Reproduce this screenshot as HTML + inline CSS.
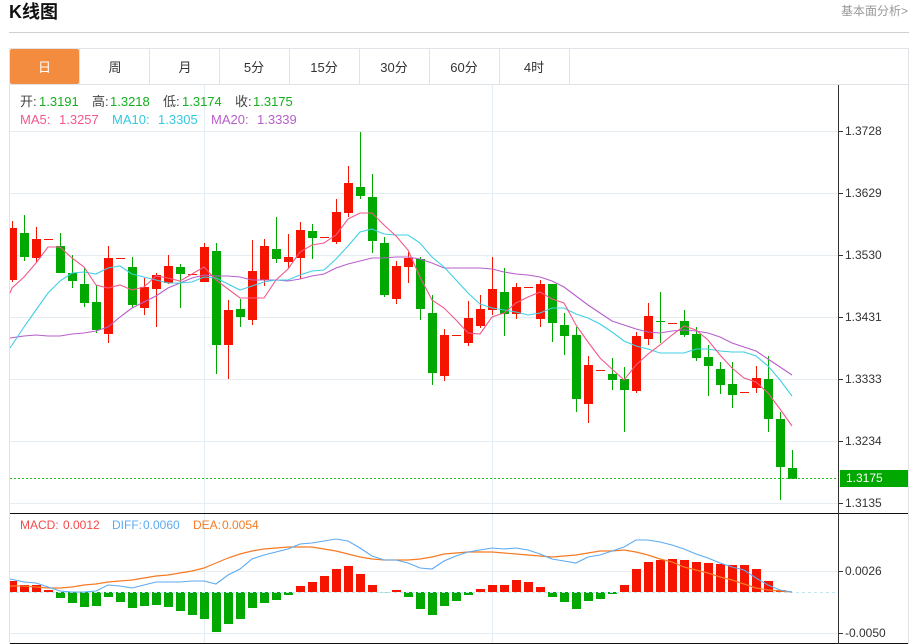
<!DOCTYPE html>
<html lang="zh">
<head>
<meta charset="utf-8">
<title>K线图</title>
<style>
html,body{margin:0;padding:0;background:#fff;}
body{width:914px;height:644px;overflow:hidden;position:relative;font-family:"Liberation Sans","Noto Sans CJK SC",sans-serif;}
.a{position:absolute;white-space:nowrap;}
.tab{position:absolute;top:49px;height:34px;line-height:37px;width:70px;text-align:center;font-size:13px;color:#333;}
.t{font-size:13px;line-height:16px;height:16px;}
.m{font-size:12px;line-height:16px;height:16px;}
.y{font-size:12px;line-height:14px;height:14px;left:845px;color:#333;}
.l{color:#444;}
.g{color:#13b01d;}
</style>
</head>
<body>
<div class="a" style="left:9px;top:0;font-size:18px;font-weight:bold;line-height:24px;color:#111;">K线图</div>
<div class="a" style="right:6px;top:3px;font-size:12px;line-height:16px;color:#999;">基本面分析&gt;</div>
<div class="a" style="left:9px;top:32px;width:900px;height:1px;background:#d0d0d0;"></div>

<svg class="a" style="left:0;top:0;" width="914" height="644" viewBox="0 0 914 644" xmlns="http://www.w3.org/2000/svg">
<g shape-rendering="crispEdges">
<rect x="9" y="48" width="900" height="1" fill="#e0e4e8"/>
<rect x="9" y="84" width="900" height="1" fill="#e0e4e8"/>
<rect x="9" y="48" width="1" height="596" fill="#e0e4e8"/>
<rect x="908" y="48" width="1" height="596" fill="#e0e4e8"/>
<path fill="#e0e4e8" d="M79 49h1v35h-1zM149 49h1v35h-1zM219 49h1v35h-1zM289 49h1v35h-1zM359 49h1v35h-1zM429 49h1v35h-1zM499 49h1v35h-1zM569 49h1v35h-1z"/>
<rect x="10" y="49" width="69" height="35" rx="2" fill="#f48c3f"/>
<path fill="#e6edf2" d="M10 131h828v1H10zM10 193h828v1H10zM10 255h828v1H10zM10 317h828v1H10zM10 379h828v1H10zM10 441h828v1H10zM10 503h828v1H10zM10 571h828v1H10zM10 633h828v1H10z"/>
<path fill="#e3edf4" d="M204 85h1v558h-1zM492 85h1v558h-1z"/>

<!-- red candles -->
<path fill="#f41400" d="M12 221h1V282h-1zM10 228h7V280h-7zM36 227h1V263h-1zM32 239h9V258h-9zM44 239h9v1h-9zM108 246h1V343h-1zM104 258h9V334h-9zM116 258h9v1h-9zM144 278h1V315h-1zM140 287h9V308h-9zM156 273h1V327h-1zM152 275h9V289h-9zM168 255h1V284h-1zM164 266h9V283h-9zM188 274h9v1h-9zM204 243h1V282h-1zM200 247h9V282h-9zM228 300h1V379h-1zM224 310h9V345h-9zM252 240h1V325h-1zM248 271h9V320h-9zM264 239h1V286h-1zM260 246h9V280h-9zM288 234h1V268h-1zM284 257h9V262h-9zM300 222h1V279h-1zM296 230h9V258h-9zM320 237h9v1h-9zM336 199h1V244h-1zM332 212h9V242h-9zM348 166h1V217h-1zM344 183h9V213h-9zM396 261h1V304h-1zM392 266h9V299h-9zM408 251h1V283h-1zM404 258h9V267h-9zM444 329h1V381h-1zM440 335h9V376h-9zM452 335h9v1h-9zM468 301h1V346h-1zM464 318h9V343h-9zM480 295h1V328h-1zM476 309h9V326h-9zM492 257h1V315h-1zM488 289h9V310h-9zM516 283h1V319h-1zM512 287h9V314h-9zM524 287h9v1h-9zM540 280h1V327h-1zM536 284h9V319h-9zM588 356h1V423h-1zM584 365h9V404h-9zM596 370h9v1h-9zM636 332h1V393h-1zM632 336h9V391h-9zM648 303h1V345h-1zM644 316h9V339h-9zM668 323h9v1h-9zM740 392h9v1h-9zM756 366h1V393h-1zM752 378h9V388h-9z"/>
<!-- green candles -->
<path fill="#00a800" d="M24 215h1V261h-1zM20 233h9V257h-9zM60 233h1V273h-1zM56 246h9V273h-9zM72 255h1V288h-1zM68 273h9V281h-9zM84 268h1V307h-1zM80 284h9V303h-9zM96 285h1V333h-1zM92 302h9V330h-9zM132 257h1V308h-1zM128 267h9V305h-9zM180 264h1V308h-1zM176 267h9V274h-9zM216 243h1V374h-1zM212 251h9V345h-9zM240 299h1V327h-1zM236 309h9V317h-9zM276 217h1V263h-1zM272 249h9V259h-9zM312 224h1V259h-1zM308 231h9V238h-9zM360 132h1V199h-1zM356 187h9V196h-9zM372 174h1V253h-1zM368 197h9V241h-9zM384 237h1V297h-1zM380 243h9V295h-9zM420 257h1V320h-1zM416 259h9V309h-9zM432 295h1V385h-1zM428 313h9V373h-9zM504 268h1V336h-1zM500 292h9V314h-9zM552 284h1V342h-1zM548 284h9V323h-9zM564 313h1V355h-1zM560 325h9V336h-9zM576 327h1V412h-1zM572 335h9V399h-9zM612 358h1V390h-1zM608 374h9V380h-9zM624 367h1V432h-1zM620 379h9V390h-9zM660 292h1V343h-1zM656 321h9v1h-9zM684 310h1V337h-1zM680 321h9V335h-9zM696 327h1V361h-1zM692 334h9V358h-9zM708 345h1V396h-1zM704 357h9V366h-9zM720 362h1V394h-1zM716 369h9V385h-9zM732 362h1V408h-1zM728 384h9V395h-9zM768 356h1V432h-1zM764 379h9V419h-9zM780 412h1V500h-1zM776 419h9V467h-9zM792 450h1V479h-1zM788 468h9V479h-9z"/>

<!-- MACD bars -->
<path fill="#f41400" d="M10 581h7V592H10zM20 585h9V592h-9zM32 585h9V592h-9zM44 590h9V592h-9zM296 586h9V592h-9zM308 582h9V592h-9zM320 576h9V592h-9zM332 569h9V592h-9zM344 566h9V592h-9zM356 574h9V592h-9zM368 585h9V592h-9zM392 590h9V592h-9zM476 589h9V592h-9zM488 585h9V592h-9zM500 585h9V592h-9zM512 580h9V592h-9zM524 582h9V592h-9zM536 587h9V592h-9zM620 585h9V592h-9zM632 569h9V592h-9zM644 562h9V592h-9zM656 560h9V592h-9zM668 559h9V592h-9zM680 560h9V592h-9zM692 562h9V592h-9zM704 563h9V592h-9zM716 564h9V592h-9zM728 565h9V592h-9zM740 565h9V592h-9zM752 569h9V592h-9zM764 581h9V592h-9zM776 590h9V592h-9z"/>
<path fill="#00a800" d="M56 592h9V598h-9zM68 592h9V603h-9zM80 592h9V607h-9zM92 592h9V606h-9zM104 592h9V597h-9zM116 592h9V602h-9zM128 592h9V608h-9zM140 592h9V606h-9zM152 592h9V605h-9zM164 592h9V607h-9zM176 592h9V611h-9zM188 592h9V615h-9zM200 592h9V619h-9zM212 592h9V632h-9zM224 592h9V624h-9zM236 592h9V619h-9zM248 592h9V608h-9zM260 592h9V603h-9zM272 592h9V600h-9zM284 592h9V595h-9zM404 592h9V597h-9zM416 592h9V609h-9zM428 592h9V615h-9zM440 592h9V606h-9zM452 592h9V601h-9zM464 592h9V595h-9zM548 592h9V597h-9zM560 592h9V602h-9zM572 592h9V609h-9zM584 592h9V601h-9zM596 592h9V599h-9zM608 592h9V594h-9z"/>
<rect x="380" y="592" width="9" height="1" fill="#a8dcb0"/>
<rect x="10" y="513" width="898" height="1" fill="#111"/>
<rect x="10" y="643" width="898" height="1" fill="#111"/>
<rect x="838" y="85" width="1" height="559" fill="#333"/>
<path fill="#333" d="M838 131h5v1h-5zM838 193h5v1h-5zM838 255h5v1h-5zM838 317h5v1h-5zM838 379h5v1h-5zM838 441h5v1h-5zM838 503h5v1h-5zM838 571h5v1h-5zM838 633h5v1h-5z"/>
<rect x="840" y="470" width="68" height="17" fill="#00a800"/>
</g>
<line x1="10" y1="478.5" x2="838" y2="478.5" stroke="#2cc02c" stroke-width="1" stroke-dasharray="2 2"/>
<line x1="10" y1="592.5" x2="835" y2="592.5" stroke="#bfe6f2" stroke-width="1" stroke-dasharray="3 3"/>

<!-- MA20 -->
<polyline fill="none" stroke="#b75fcb" stroke-width="1.1" points="10,338 24,336 36,335 48,336 60,336 72,334 84,333 96,331 108,327 120,317 132,308 144,302 156,296 168,288 180,283 192,278 204,275 216,276 228,276 240,277 252,280 264,280 276,280 288,281 300,279 312,276 324,274 336,268 348,264 360,261 372,258 384,258 396,257 408,257 420,259 432,263 444,268 456,268 468,268 480,268 492,269 504,272 516,274 528,275 540,277 552,281 564,287 576,296 588,305 600,313 612,321 624,325 636,329 648,332 660,333 672,331 684,330 696,331 708,333 720,337 732,343 744,347 756,351 768,359 780,367 792,375"/>
<!-- MA10 -->
<polyline fill="none" stroke="#3fcfe4" stroke-width="1.1" points="10,348 24,327 36,310 48,293 60,281 72,273 84,272 96,274 108,268 120,266 132,274 144,277 156,280 168,283 180,283 192,282 204,277 216,278 228,284 240,290 252,286 264,282 276,280 288,280 300,275 312,271 324,270 336,259 348,246 360,232 372,229 384,234 396,235 408,235 420,243 432,257 444,267 456,280 468,293 480,304 492,308 504,310 516,312 528,315 540,313 552,308 564,308 576,314 588,318 600,324 612,332 624,341 636,346 648,349 660,353 672,353 684,353 696,349 708,349 720,351 732,352 744,352 756,356 768,366 780,380 792,396"/>
<!-- MA5 -->
<polyline fill="none" stroke="#f2588c" stroke-width="1.1" points="10,293 12,288 24,277 36,263 48,247 60,247 72,258 84,267 96,285 108,288 120,285 132,290 144,287 156,276 168,278 180,281 192,274 204,267 216,280 228,289 240,298 252,298 264,298 276,280 288,269 300,252 312,245 324,243 336,235 348,219 360,213 372,213 384,225 396,236 408,250 420,277 432,300 444,308 456,320 468,333 480,334 492,317 504,313 516,303 528,297 540,292 552,299 564,303 576,325 588,342 600,358 612,369 624,380 636,365 648,354 660,345 672,335 684,326 696,330 708,340 720,355 732,368 744,378 756,382 768,393 780,409 792,426"/>
<!-- DEA -->
<polyline fill="none" stroke="#f57b24" stroke-width="1.2" points="10,586 24,586 36,587 48,588 60,588 72,587 84,585 96,584 108,582 120,581 132,580 144,578 156,576 168,575 180,573 192,571 204,568 216,563 228,558 240,554 252,551 264,549 276,548 288,547 300,547 312,547 324,549 336,551 348,554 360,557 372,559 384,560 396,560 408,560 420,559 432,557 444,554 456,553 468,552 480,552 492,552 504,553 516,554 528,555 540,556 552,557 564,556 576,555 588,553 600,551 612,551 624,550 636,552 648,555 660,559 672,562 684,567 696,570 708,573 720,577 732,580 744,584 756,588 768,590 780,591 792,592"/>
<!-- DIFF -->
<polyline fill="none" stroke="#5cabf2" stroke-width="1.1" points="10,579 24,582 36,583 48,587 60,591 72,592 84,592 96,591 108,585 120,586 132,588 144,585 156,582 168,582 180,582 192,581 204,581 216,584 228,575 240,569 252,559 264,555 276,552 288,549 300,544 312,543 324,541 336,539 348,541 360,548 372,556 384,560 396,560 408,563 420,568 432,569 444,561 456,556 468,552 480,550 492,548 504,549 516,548 528,550 540,554 552,559 564,561 576,563 588,557 600,555 612,551 624,547 636,540 648,540 660,542 672,545 684,549 696,554 708,558 720,563 732,567 744,570 756,578 768,585 780,590 792,592"/>
</svg>

<div class="tab" style="left:10px;color:#fff;width:69px;">日</div>
<div class="tab" style="left:80px;">周</div>
<div class="tab" style="left:150px;">月</div>
<div class="tab" style="left:219px;">5分</div>
<div class="tab" style="left:289px;">15分</div>
<div class="tab" style="left:359px;">30分</div>
<div class="tab" style="left:429px;">60分</div>
<div class="tab" style="left:499px;">4时</div>

<div class="a t l" style="left:20px;top:94px;">开:</div><div class="a t g" style="left:39px;top:94px;">1.3191</div>
<div class="a t l" style="left:92px;top:94px;">高:</div><div class="a t g" style="left:110px;top:94px;">1.3218</div>
<div class="a t l" style="left:163px;top:94px;">低:</div><div class="a t g" style="left:182px;top:94px;">1.3174</div>
<div class="a t l" style="left:235px;top:94px;">收:</div><div class="a t g" style="left:253px;top:94px;">1.3175</div>

<div class="a t" style="left:20px;top:112px;color:#f2588c;">MA5:</div><div class="a t" style="left:59px;top:112px;color:#f2588c;">1.3257</div>
<div class="a t" style="left:112px;top:112px;color:#35c9e2;">MA10:</div><div class="a t" style="left:158px;top:112px;color:#35c9e2;">1.3305</div>
<div class="a t" style="left:211px;top:112px;color:#b75fcb;">MA20:</div><div class="a t" style="left:257px;top:112px;color:#b75fcb;">1.3339</div>

<div class="a m" style="left:20px;top:517px;color:#f44a4a;">MACD:</div><div class="a m" style="left:63px;top:517px;color:#f44a4a;">0.0012</div>
<div class="a m" style="left:112px;top:517px;color:#5cabf2;">DIFF:</div><div class="a m" style="left:143px;top:517px;color:#5cabf2;">0.0060</div>
<div class="a m" style="left:193px;top:517px;color:#f57b24;">DEA:</div><div class="a m" style="left:222px;top:517px;color:#f57b24;">0.0054</div>

<div class="a y" style="top:124px;">1.3728</div>
<div class="a y" style="top:186px;">1.3629</div>
<div class="a y" style="top:248px;">1.3530</div>
<div class="a y" style="top:310px;">1.3431</div>
<div class="a y" style="top:372px;">1.3333</div>
<div class="a y" style="top:434px;">1.3234</div>
<div class="a y" style="top:471px;left:846px;color:#fff;">1.3175</div>
<div class="a y" style="top:496px;">1.3135</div>
<div class="a y" style="top:564px;">0.0026</div>
<div class="a y" style="top:626px;">-0.0050</div>
</body>
</html>
